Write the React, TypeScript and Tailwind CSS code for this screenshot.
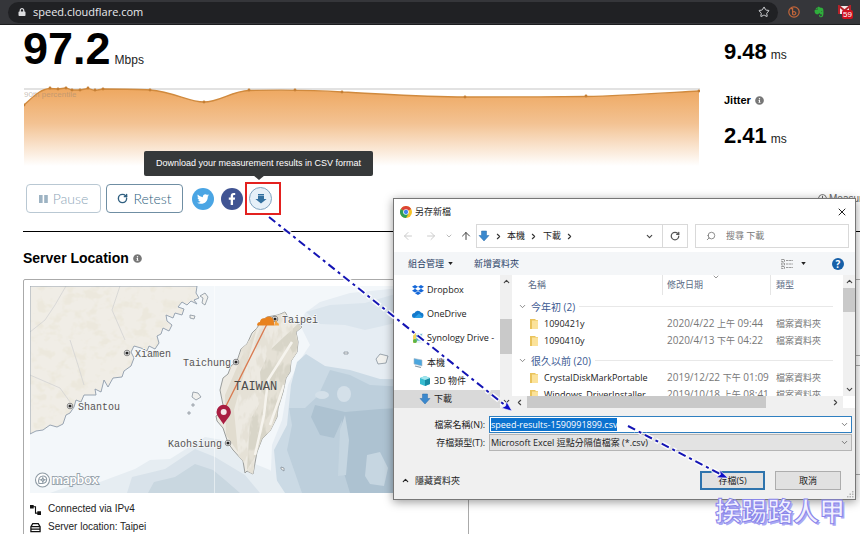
import React from "react";
import { ChevronDown, ChevronRight, ChevronUp, ChevronLeft, ArrowLeft, ArrowRight, ArrowUp, RotateCw, Search, Star, X } from "lucide-react";
import { FaDropbox, FaEvernote, FaFacebookF, FaInfoCircle, FaLock, FaRegClock, FaTwitter } from "react-icons/fa";

const samples: [number, number][] = [
  [0, 21], [26, 4], [34, 5], [42, 4], [48, 6], [56, 6], [64, 4], [71, 6], [79, 5], [126, 6],
  [180, 18], [225, 6], [271, 6], [318, 8], [441, 13], [562, 12], [675, 7],
];

const curve =
  "M0 21C8 14 16 5 26 4.5L34 5 42 4 48 6 56 6 64 4.5 71 6.5 79 5C100 5 115 5 126 6C150 8 165 18 180 18C195 18 208 7 225 6.5C250 6 290 6 318 8C360 10 400 13 441 13C490 13 520 13 562 12.5C600 12 640 9 675 7";

function BrowserBar() {
  return (
    <header className="flex h-[25px] items-center border-b border-[#1c1d1f] bg-[#35363a] pr-2 pl-2">
      <div className="flex h-[21px] flex-1 items-center rounded-full bg-[#202124] pr-2 pl-[10px]">
        <FaLock className="size-2 text-[#dcdde0]" />
        <span className="ml-[7px] flex-1 font-['Open_Sans',sans-serif] text-[11px] leading-4 text-[#e8eaed]">speed.cloudflare.com</span>
        <Star className="size-3 text-[#d5d7da]" />
      </div>
      <div className="ml-[10px] flex items-center gap-[13px]">
        <svg viewBox="0 0 12 12" className="size-3" fill="none" stroke="#c3663a">
          <circle cx="6" cy="6" r="5.2" strokeWidth="1.2" />
          <path d="M3 2.6h1.6v6.2M4.6 6.1a1.9 1.6 0 1 1 0 2.3" strokeWidth="1.2" />
        </svg>
        <FaEvernote className="size-3 text-[#2fae3c]" />
        <div className="relative size-[14px]">
          <svg viewBox="0 0 14 14" className="size-[14px]">
            <path d="M1 1h11v8H1z" fill="#f4e9e9" />
            <path d="M1 9V1l5.500 4.500L12 1v8" fill="none" stroke="#b3222a" strokeWidth="2" />
          </svg>
          <span className="absolute top-[5px] left-[4px] rounded-xs bg-[#d0101f] px-px text-[8px] leading-[9px] text-white">59</span>
        </div>
      </div>
    </header>
  );
}

function SpeedChart() {
  return (
    <svg viewBox="0 0 676 82" className="ml-px mt-[11px] block w-full">
      <defs>
        <linearGradient id="fade" x1="0" y1="0" x2="0" y2="1">
          <stop offset="0" stopColor="#eea75f" />
          <stop offset="0.45" stopColor="#f3c292" />
          <stop offset="1" stopColor="#ffffff" />
        </linearGradient>
      </defs>
      <path d="M0 5H676" stroke="#d9d9d9" strokeWidth="1.5" />
      <path d={`${curve}V82H0Z`} fill="url(#fade)" />
      <text x="0" y="13" fontSize="8" fill="#9c8a78" fillOpacity="0.55">90th percentile</text>
      <path d={curve} fill="none" stroke="#d08a3e" strokeWidth="1.3" />
      {samples.map(([x, y]) => (
        <circle key={x} cx={x} cy={y} r="1.4" fill="#c57f35" />
      ))}
    </svg>
  );
}

function Metric({ value, unit }: { value: string; unit: string }) {
  return (
    <p className="text-[22px] leading-6 text-[#222]">
      <span className="font-bold text-black">{value}</span>
      <span className="ml-1 text-xs leading-none">{unit}</span>
    </p>
  );
}

function Controls() {
  return (
    <div className="mt-[18px] ml-[3px] flex items-center font-['Lato',sans-serif]">
      <button className="flex h-[29px] w-[75px] items-center justify-center gap-[5px] rounded border border-[#b9c8d3] text-sm font-light text-[#8ea6b8]">
        <svg viewBox="0 0 9 9" className="size-[9px]" fill="#9db3c3">
          <path d="M0 1h3.600v8H0zM5.200 1h3.600v8H5.200z" />
        </svg>
        Pause
      </button>
      <button className="ml-[5px] flex h-[29px] w-[77px] items-center justify-center gap-[5px] rounded border border-[#6f8ea3] text-sm font-light text-[#2f5f80]">
        <RotateCw className="size-[11px]" strokeWidth={3} />
        Retest
      </button>
      <button aria-label="Share on Twitter" className="ml-[9px] flex size-[22px] items-center justify-center rounded-full bg-[#4aa5e4] text-white">
        <FaTwitter className="size-3" />
      </button>
      <button aria-label="Share on Facebook" className="ml-[7px] flex size-[22px] items-center justify-center rounded-full bg-[#405493] text-white">
        <FaFacebookF className="size-3" />
      </button>
      <div className="relative -my-[2px] ml-[2px] flex h-[33px] w-[36px] items-center border-2 border-[#e3211f] pl-[2px]">
        <button aria-label="Download" className="flex size-[23px] items-center justify-center rounded-full border border-[#7fa3c0] bg-[#e6f0f8]">
          <svg viewBox="0 0 12 12" className="size-3" fill="#33709f">
            <path d="M3 1h6v1.400H3zM3 3h6v3h2.600L6 10.500.4 6H3z" />
          </svg>
        </button>
        <div role="tooltip" className="absolute -top-[33px] -left-[103px] rounded-xs bg-[#36393a] px-3 font-['Liberation_Sans',sans-serif] text-[9px] leading-[25px] whitespace-nowrap text-white">
          Download your measurement results in CSV format
          <svg viewBox="0 0 12 5" className="absolute top-[25px] left-[109px] h-[4px] w-3" fill="#36393a">
            <path d="M0 0h12L6 5z" />
          </svg>
        </div>
      </div>
      <p className="-mr-[160px] ml-auto flex w-[41px] items-center gap-[2px] font-['Liberation_Sans',sans-serif] text-[10px] whitespace-nowrap text-[#666]">
        <FaRegClock className="size-[9px] shrink-0" />
        Measured
      </p>
    </div>
  );
}

const china =
  "M30 286H197L196 293 199 298 194 300 197 304 191 301 187 305 182 302 178 307 184 309 182 315 175 313 173 318 166 315 167 321 172 325 169 331 163 328 161 334 157 336 159 343 155 349 149 346 147 351 141 348 134 346 131 352 134 358 131 366 124 371 122 377 113 378 108 387 104 380 101 392 95 389 96 395 84 395 81 402 76 400 74 407 70 413 66 415 63 424 57 427 50 425 43 430 36 431 30 434Z";
const taiwan =
  "M267 317L278 315 285 312 290 320 296 322 302 327 296 332 298 342 297 352 291 361 290 372 286 378 283 392 278 408 277 417 270 431 262 439 257 452 255 463 253 474 247 471 245 473 243 461 233 450 228 443 223 428 217 421 216 416 222 412 223 405 220 390 223 378 228 374 231 366 237 361 241 349 247 344 252 333 257 328 261 321Z";

const cities = [
  { name: "Xiamen", cx: 127, cy: 353, x: 135, y: 357 },
  { name: "Shantou", cx: 70, cy: 406, x: 78, y: 410 },
  { name: "Taipei", cx: 275, cy: 319, x: 282, y: 323 },
  { name: "Taichung", cx: 236, cy: 362, x: 183, y: 366 },
  { name: "Kaohsiung", cx: 228, cy: 443, x: 168, y: 447 },
];

function ServerMap() {
  return (
    <svg viewBox="30 286 432 207" preserveAspectRatio="xMinYMin slice" className="block h-[207px] w-full font-['Liberation_Mono',monospace]">
      <defs>
        <clipPath id="chinaClip"><path d={china} /></clipPath>
        <clipPath id="taiwanClip"><path d={taiwan} /></clipPath>
        <filter id="terrain" x="0" y="0" width="1" height="1">
          <feTurbulence type="fractalNoise" baseFrequency="0.08 0.1" numOctaves="3" seed="4" />
          <feColorMatrix values="0 0 0 0 0.84  0 0 0 0 0.81  0 0 0 0 0.72  5 0 0 0 -2.45" />
        </filter>
        <filter id="ridge" x="0" y="0" width="1" height="1">
          <feTurbulence type="fractalNoise" baseFrequency="0.12 0.06" numOctaves="3" seed="9" />
          <feColorMatrix values="0 0 0 0 0.78  0 0 0 0 0.75  0 0 0 0 0.67  6 0 0 0 -2.7" />
        </filter>
      </defs>
      <path d="M30 286H462V493H30z" fill="#f3f7fa" />
      <path d="M305 313L320 302 350 293 400 288 462 290V493H270L272 445 282 420 288 385 300 360 310 345 300 325Z" fill="#e6edf3" />
      <path d="M306 312L330 305 365 303 385 297 410 290 462 292V320L400 322 365 330 345 325 320 324Z" fill="#dbe5ed" />
      <path d="M278 493L274 450 287 425 291 385 297 362 306 354 325 366 350 370 380 379 462 380V493Z" fill="#cbdae5" />
      <path d="M302 493L287 450 292 425 289 408 305 408 318 396 330 370 350 375 370 385 462 390V493Z" fill="#bdcfdc" />
      <path d="M320 435L311 417 315 405 345 412 380 409 462 405V493H350L340 460 342 420 334 438Z" fill="#adc2d1" />
      <path d="M338 476L340 430 345 415 349 440 346 475ZM365 476L367 455 380 452 388 468 384 486 370 484Z" fill="#c6d6e1" />
      <ellipse cx="344" cy="394" rx="7" ry="8" fill="#d4e0e9" />
      <ellipse cx="322" cy="395" rx="7" ry="4" fill="#d4e0e9" />
      <path d="M50 493L75 484 100 482 135 469 150 460 170 459 205 437 222 440 240 458 270 470 285 493Z" fill="#e6edf2" />
      <path d="M127 493L132 477 165 469 195 449 215 457 245 475 260 493Z" fill="#d8e2ea" />
      <path d="M148 493L154 482 175 477 195 464 213 470 225 480 240 493Z" fill="#c9d7e0" />
      <path d="M214.500 286V493" stroke="#fff" strokeWidth="0.700" strokeOpacity="0.700" />
      <path d={china} fill="#f0ede6" />
      <g clipPath="url(#chinaClip)">
        <path d="M30 286H200V436H30z" filter="url(#terrain)" />
        <path d="M66 286L55 305 45 320 30 332M70 340L78 365 84 385M30 375L60 388 70 402M120 286L112 310 125 340" fill="none" stroke="#d3d3d3" strokeWidth="0.800" />
      </g>
      <path d={china} fill="none" stroke="#8f9cab" strokeWidth="0.900" />
      <path d={taiwan} fill="#edeae2" stroke="#9a9d9c" strokeWidth="1" />
      <g clipPath="url(#taiwanClip)">
        <path d="M300 322L270 350 260 372 262 400 250 420 247 470 262 445 280 420 300 350Z" fill="#d8d5c8" />
        <path d="M258 325L240 360 225 395 226 435 238 452 234 410 245 370Z" fill="#e1dccf" />
        <path d="M245 312H303V475H238z" filter="url(#ridge)" />
        <path d="M292 342L268 380 264 415 255 455M284 385L270 425" fill="none" stroke="#f6f4ee" strokeWidth="2.500" />
      </g>
      <path d="M200 296l5-3 3 4-3 8-3-2 1-5zM190 315l5 1-1 3-4-1zM193 392l5 1 3 4-5 3-4-3zM192 404h2v2h-2zM188 412h2v2h-2zM376 359l4-5 8 2-2 7-8 1zM281 467l3 1v3l-3-2zM344 352h4v2h-4z" fill="#f1f1ee" stroke="#88939d" strokeWidth="0.800" />
      <path d="M268 322L224 410" stroke="#d97a50" strokeWidth="1.300" />
      {cities.map((c) => (
        <g key={c.name}>
          <circle cx={c.cx} cy={c.cy} r="2.800" fill="#fff" stroke="#555" strokeWidth="0.700" />
          <circle cx={c.cx} cy={c.cy} r="1.600" fill="#222" />
          <text x={c.x} y={c.y} fontSize="10" fill="#555" stroke="#f5f7f8" strokeWidth="1.500" paintOrder="stroke">{c.name}</text>
        </g>
      ))}
      <text x="234" y="390" fontSize="12" fill="#4c4c4c">TAIWAN</text>
      <path d="M257 325.500c0-2.500 1.500-3.500 3-3.500 0-3 3-4.500 5-3.500 1.500-3 7-3 8.500 1.500l1 5.500z" fill="#e8821e" />
      <path d="M274.500 325.500l.5-3.500 1-2.500 1 3c1.500 0 2 1.500 2 3z" fill="#f6a540" />
      <path d="M223.500 424.500C221 420 216.500 416 216.500 412a7.200 7.200 0 0 1 14.400 0C230.900 416 226 420 223.500 424.500Z" fill="#a91e42" />
      <circle cx="223.700" cy="412" r="3" fill="#f4e9ea" />
      <g fill="none" stroke="#8e9ba5" strokeWidth="1.100">
        <circle cx="42.500" cy="480" r="7" fill="#fff" />
        <path d="M39 483.500c-1-4 0-7.500 4-7.500 5 0 5 7-.5 7.500zM42.800 477.800l.7 1.500 1.500.6-1.500.7-.7 1.500-.7-1.500-1.500-.7 1.500-.6z" />
      </g>
      <text x="52" y="484" fontSize="13" fontWeight="700" fill="#fff" stroke="#98a4ad" strokeWidth="1.800" paintOrder="stroke" className="font-['Lato',sans-serif]">mapbox</text>
    </svg>
  );
}

function ServerLocation() {
  return (
    <section className="border-t border-black pt-4">
      <h2 className="flex h-5 items-center gap-1 text-sm font-bold text-black">
        Server Location <FaInfoCircle className="size-[9px] text-[#777]" />
      </h2>
      <div className="mt-[11px] grid grid-cols-[54fr_46fr] items-start gap-3">
        <article className="rounded-xs border border-[#aaa] p-1.5 pb-8">
          <ServerMap />
          <ul className="mt-[7px] text-[10px] leading-[18px] text-[#222]">
            <li className="flex items-center gap-[7px]">
              <svg viewBox="0 0 12 12" className="size-[11px]" fill="#111">
                <path d="M0 1h4v4H0zM8 8h4v4H8z" />
                <path d="M3 3h3v7h3" fill="none" stroke="#111" strokeWidth="1.200" />
              </svg>
              Connected via IPv4
            </li>
            <li className="flex items-center gap-[7px]">
              <svg viewBox="0 0 12 12" className="size-[11px]" fill="none" stroke="#111" strokeWidth="1.400">
                <path d="M3 1.700h6L11 5v5.500H1V5zM1 5h10M1 7.800h10" />
              </svg>
              Server location: Taipei
            </li>
          </ul>
        </article>
        <div className="flex flex-col gap-[9px]">
          <div className="h-[77px] border border-r-0 border-[#aaa]" />
          <div className="h-[110px] border border-r-0 border-[#aaa]" />
        </div>
      </div>
    </section>
  );
}

function ChromeLogo() {
  return (
    <svg viewBox="0 0 24 24" className="size-3">
      <circle cx="12" cy="12" r="12" fill="#f7c325" />
      <path d="M12 12L1.600 6A12 12 0 0 1 22.400 6Z" fill="#dc4437" />
      <path d="M12 12L1.600 6A12 12 0 0 0 12 24L17 15Z" fill="#2f9e55" />
      <circle cx="12" cy="12" r="5.600" fill="#fff" />
      <circle cx="12" cy="12" r="4.300" fill="#4284f0" />
    </svg>
  );
}

function DownArrow() {
  return (
    <svg viewBox="0 0 12 12" className="size-3 shrink-0" fill="#3a88cd" stroke="#2a6cab" strokeWidth="0.500">
      <path d="M3.500 1h5v4.500H11L6 11 1 5.500h2.500z" />
    </svg>
  );
}

function Folder() {
  return (
    <svg viewBox="0 0 8 10" className="h-[10px] w-2 shrink-0">
      <path d="M0 0h5l1 1h2v9H0z" fill="#e9c35c" />
      <path d="M2 1.500h6V10H2z" fill="#fbe29a" />
    </svg>
  );
}

const navItems = [
  { label: "Dropbox", style: "h-6 pl-[18px]", icon: <FaDropbox className="size-3 shrink-0 text-[#1668d8]" /> },
  {
    label: "OneDrive",
    style: "h-6 pl-[18px]",
    icon: (
      <svg viewBox="0 0 12 12" className="size-3 shrink-0">
        <path d="M2.500 10a2.500 2.500 0 0 1 0-5A3.600 3.600 0 0 1 9 4.500a2.800 2.800 0 0 1 .5 5.500z" fill="#1479cc" />
        <path d="M2 10L7 5.500 11 9.500 9.500 10z" fill="#2ba0e6" />
      </svg>
    ),
  },
  {
    label: "Synology Drive -",
    style: "h-6 pl-[18px]",
    icon: (
      <svg viewBox="0 0 12 12" className="size-3 shrink-0">
        <path d="M1 1h5v10H1z" fill="#f1d35e" />
        <path d="M4 1h7v10H4z" fill="#e8f4f8" />
        <path d="M5 3v5h4M9 2v4" fill="none" stroke="#2a8fc7" strokeWidth="1.200" />
        <circle cx="3" cy="9" r="2" fill="#59b548" />
      </svg>
    ),
  },
  {
    label: "本機",
    style: "mt-1 h-[18px] pl-[18px]",
    icon: (
      <svg viewBox="0 0 12 12" className="size-3 shrink-0">
        <path d="M2 1.500l8 1.500v6L2 7z" fill="#4ba6de" stroke="#a9bac7" strokeWidth="0.600" />
        <path d="M3 9l6 1.500" stroke="#8797a4" strokeWidth="1.200" />
      </svg>
    ),
  },
  {
    label: "3D 物件",
    style: "h-[18px] pl-[25px]",
    icon: (
      <svg viewBox="0 0 12 12" className="size-3 shrink-0">
        <path d="M1 3l5-2 5 2v6l-5 2-5-2z" fill="#37bcd0" />
        <path d="M6 5l5-2v6l-5 2z" fill="#178ba4" />
        <path d="M1 3l5-2 5 2-5 2z" fill="#a4e5ed" />
      </svg>
    ),
  },
  { label: "下載", style: "h-[18px] pl-[25px] bg-[#d9d9d9]", icon: <DownArrow /> },
];

const groups = [
  { title: "今年初 (2)", rows: [["1090421y", "2020/4/22", "上午", "09:44"], ["1090410y", "2020/4/13", "下午", "04:22"]] },
  { title: "很久以前 (20)", rows: [["CrystalDiskMarkPortable", "2019/12/22", "下午", "01:09"], ["Windows_DriverInstaller", "2019/10/18", "上午", "08:41"]] },
];

const columns = "grid grid-cols-[144px_108px_1fr]";

function FileList() {
  return (
    <div className="flex min-w-0 flex-1">
      <div className="flex min-w-0 flex-1 flex-col">
        <div className="h-[121px] overflow-hidden pl-[6px]">
          <div className={`${columns} relative h-5 leading-5 text-[#5b6b85]`}>
            <span className="pl-[10px]">名稱</span>
            <span className="border-l border-[#e5e5e5] pl-1">修改日期</span>
            <span className="border-l border-[#e5e5e5] pl-[5px]">類型</span>
            <ChevronDown className="absolute -top-[2px] left-[194px] size-2 text-[#666]" />
          </div>
          {groups.map((g) => (
            <section key={g.title} className="pt-[3px]">
              <h3 className="flex h-[17px] items-center text-[10px] text-[#3c5a92]">
                <ChevronDown className="mr-1 size-[9px] text-[#666]" />
                {g.title}
                <span className="mr-[10px] ml-1 h-px flex-1 bg-[#e8e8e8]" />
              </h3>
              {g.rows.map(([name, day, half, time]) => (
                <div key={name} className={`${columns} h-[17px] items-center leading-[17px] text-[#777]`}>
                  <span className="flex items-center gap-[6px] pl-3 whitespace-nowrap text-[#222]"><Folder />{name}</span>
                  <span className="pl-[5px] text-[10px] whitespace-nowrap">{day} <span className="text-[9px]">{half}</span> {time}</span>
                  <span className="pl-1.5">檔案資料夾</span>
                </div>
              ))}
            </section>
          ))}
        </div>
        <div className="flex h-3 items-center bg-[#f0f0f0]">
          <ChevronLeft className="mx-[3px] size-[9px] shrink-0 text-[#444]" strokeWidth={3} />
          <span className="h-3 w-[239px] bg-[#c9c9c9]" />
          <ChevronRight className="mr-[3px] ml-auto size-[9px] text-[#444]" strokeWidth={3} />
        </div>
      </div>
      <div className="mb-3 flex w-3 flex-col items-center bg-[#f0f0f0]">
        <ChevronUp className="my-[2px] size-[9px] text-[#444]" strokeWidth={3} />
        <span className="h-6 w-full bg-[#c9c9c9]" />
        <ChevronDown className="mt-auto mb-[2px] size-[9px] text-[#444]" strokeWidth={3} />
      </div>
    </div>
  );
}

function SaveDialog() {
  return (
    <div role="dialog" aria-label="另存新檔" className="absolute top-[198px] left-[393px] flex h-[302px] w-[463px] flex-col border border-[#777] bg-white font-['Open_Sans','Noto_Sans_CJK_TC',sans-serif] text-[9px] leading-4 text-[#222] shadow-[0_2px_9px_rgba(0,0,0,0.4)]">
      <div className="flex h-[25px] items-center pr-[7px] pl-[6px]">
        <ChromeLogo />
        <span className="ml-[3px] flex-1">另存新檔</span>
        <button aria-label="Close"><X className="size-3 text-[#222]" strokeWidth={2} /></button>
      </div>
      <div className="flex h-6 items-center pr-[6px] pl-2">
        <ArrowLeft className="size-3 text-[#ccc]" />
        <ArrowRight className="ml-[11px] size-3 text-[#ccc]" />
        <ChevronDown className="ml-2 size-2 text-[#bbb]" strokeWidth={3} />
        <ArrowUp className="ml-[7px] size-3 text-[#444]" />
        <div className="ml-1 flex h-6 flex-1 items-center border border-[#d9d9d9] pl-px">
          <DownArrow />
          <ChevronRight className="mr-[4px] ml-[4px] size-[9px] text-[#333]" strokeWidth={3} />
          本機
          <ChevronRight className="ml-[4px] mr-[5px] size-[9px] text-[#333]" strokeWidth={3} />
          下載
          <ChevronRight className="ml-1 size-[9px] text-[#333]" strokeWidth={3} />
          <ChevronDown className="mr-2 ml-auto size-[9px] text-[#444]" strokeWidth={3} />
          <button aria-label="Refresh" className="flex h-full w-[25px] items-center justify-center border-l border-[#d9d9d9]">
            <RotateCw className="size-[10px] text-[#555]" strokeWidth={3} />
          </button>
        </div>
        <label className="ml-[7px] flex h-6 w-[154px] items-center border border-[#d9d9d9] pl-[10px]">
          <Search className="size-[10px] -scale-x-100 text-[#777]" />
          <input aria-label="搜尋" placeholder="搜尋 下載" className="ml-[10px] w-24 outline-none placeholder:text-[#777]" />
        </label>
      </div>
      <div className="mt-[4px] flex h-[23px] items-center bg-[#f4f6f8] pr-[11px] pl-[14px] text-[#2a4166]">
        <button className="flex items-center gap-1">
          組合管理
          <svg viewBox="0 0 6 4" className="h-[3px] w-[5px]"><path d="M0 0h6L3 4z" fill="#222" /></svg>
        </button>
        <button className="ml-[21px]">新增資料夾</button>
        <button aria-label="View" className="mr-[26px] ml-auto flex items-center gap-2">
          <svg viewBox="0 0 12 10" className="h-[10px] w-3" fill="none" stroke="#999">
            <path d="M.5.500h3v2h-3zM.5 4h3v2h-3zM.5 7.500h3v2h-3zM5 1.500h7M5 5h7M5 8.500h7" strokeDasharray="2.500 .6" />
          </svg>
          <svg viewBox="0 0 6 4" className="h-[3px] w-[5px]"><path d="M0 0h6L3 4z" fill="#222" /></svg>
        </button>
        <button aria-label="Help" className="size-[12px] rounded-full bg-[#1760a8] text-center text-[10px] leading-3 font-bold text-white">?</button>
      </div>
      <div className="flex h-[133px]">
        <nav className="w-[106px] overflow-hidden pt-[3px]">
          {navItems.map((n) => (
            <a key={n.label} href="#" className={`flex items-center gap-[3px] whitespace-nowrap ${n.style}`}>
              {n.icon}
              {n.label}
            </a>
          ))}
        </nav>
        <div className="flex w-3 shrink-0 flex-col items-center bg-[#f0f0f0]">
          <ChevronUp className="mt-[2px] size-[9px] text-[#444]" strokeWidth={3} />
          <span className="mt-[33px] h-[35px] w-full bg-[#c9c9c9]" />
          <ChevronDown className="mt-auto mb-[2px] size-[9px] text-[#444]" strokeWidth={3} />
        </div>
        <FileList />
      </div>
      <div className="relative flex-1 bg-[#f0f0f0] pt-2 pr-[3px]">
        <div className="flex items-center">
          <label htmlFor="filename" className="w-[91px] text-right">檔案名稱(N):</label>
          <div className="ml-1 flex h-[17px] flex-1 items-center border border-[#2f7fc0] bg-white pl-px">
            <input id="filename" defaultValue="speed-results-1590991899.csv" className="field-sizing-content h-[13px] bg-[#0b72cf] text-white outline-none" />
            <ChevronDown className="mr-[2px] ml-auto size-[9px] text-[#555]" />
          </div>
        </div>
        <div className="mt-px flex items-center">
          <label htmlFor="filetype" className="w-[91px] text-right">存檔類型(T):</label>
          <div className="ml-1 flex h-[17px] flex-1 items-center border border-[#b5b5b5] bg-[#e3e3e3] pl-px">
            <select id="filetype" className="flex-1 appearance-none outline-none">
              <option>Microsoft Excel 逗點分隔值檔案 (*.csv)</option>
            </select>
            <ChevronDown className="mr-[2px] size-[9px] text-[#555]" />
          </div>
        </div>
        <div className="mt-5 flex h-[19px] items-center gap-[10px] pr-[11px] pl-[7px]">
          <button className="mr-auto flex items-center gap-[5px]"><ChevronUp className="size-[9px]" strokeWidth={3} />隱藏資料夾</button>
          <button className="h-[19px] w-[65px] border-2 border-[#2f74ad] bg-[#e1e1e1] leading-[15px]">存檔(S)</button>
          <button className="h-[19px] w-[66px] border border-[#adadad] bg-[#e1e1e1] leading-[17px]">取消</button>
        </div>
        <svg viewBox="0 0 7 7" className="absolute right-px bottom-px size-[7px]" fill="#b5b5b5">
          <path d="M5 0h1.500v1.500H5zM5 2.500h1.500V4H5zM5 5h1.500v1.500H5zM2.500 2.500H4V4H2.500zM2.500 5H4v1.500H2.500zM0 5h1.500v1.500H0z" />
        </svg>
      </div>
    </div>
  );
}

function Annotations() {
  return (
    <svg className="pointer-events-none absolute top-0 left-0 h-[534px] w-[860px]" fill="none">
      <path d="M269 217L506 406M628 426L720 474" stroke="#fff" strokeWidth="5" strokeOpacity="0.850" strokeDasharray="9 3 4 3" />
      <path d="M269 217L506 406M628 426L720 474" stroke="#1414b4" strokeWidth="2" strokeDasharray="8 4 3 4" />
      <path d="M512 411l-10.500-3 4-2 1-4.500zM728 478l-12-.500 4.500-3-1-4.500z" fill="#1010c8" stroke="#fff" strokeWidth="0.600" />
    </svg>
  );
}

export default function App() {
  return (
    <div className="relative h-screen overflow-hidden bg-white font-['Liberation_Sans',Arial,sans-serif]">
      <BrowserBar />
      <main className="pl-[23px]">
        <div className="flex pb-[18px]">
          <div className="min-w-0 flex-1">
            <p className="text-[45px] leading-[48px] text-[#222]">
              <span className="font-bold text-black">97.2</span>
              <span className="ml-1 text-xs leading-none">Mbps</span>
            </p>
            <SpeedChart />
            <Controls />
          </div>
          <aside className="ml-[25px] w-[136px] pt-[15px]">
            <Metric value="9.48" unit="ms" />
            <h3 className="mt-7 mb-4 flex h-4 items-center gap-1 text-[11px] font-bold text-black">
              Jitter <FaInfoCircle className="size-[9px] text-[#777]" />
            </h3>
            <Metric value="2.41" unit="ms" />
          </aside>
        </div>
        <ServerLocation />
      </main>
      <SaveDialog />
      <Annotations />
      <p className="absolute top-[494px] left-[715px] font-['Noto_Sans_CJK_TC',sans-serif] text-[26px] leading-8 font-bold whitespace-nowrap text-[#f1f0ff] [-webkit-text-stroke:1px_#8a86ea] [text-shadow:2px_2px_0_#aaa8f4]">挨踢路人甲</p>
    </div>
  );
}
